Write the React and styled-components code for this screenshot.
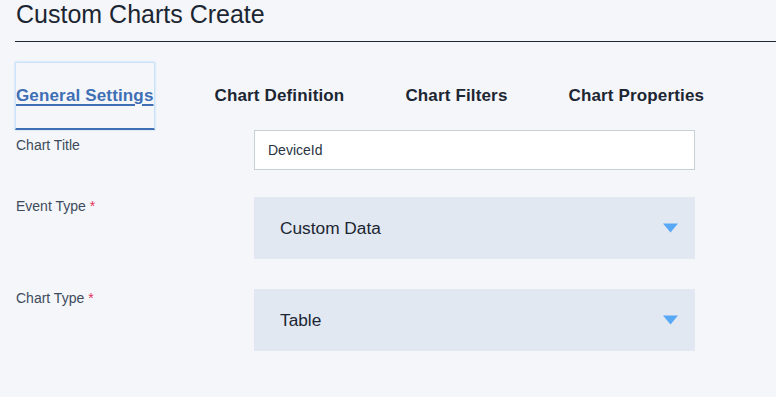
import styled, { createGlobalStyle } from "styled-components";

const GlobalStyle = createGlobalStyle`
  body {
    margin: 0;
    background: #ffffff;
    font-family: "Liberation Sans", Arial, sans-serif;
  }
`;

const tabs = ["General Settings", "Chart Definition", "Chart Filters", "Chart Properties"];

function Arrow() {
  return (
    <svg width="15" height="10" viewBox="0 0 15 10">
      <path d="M0 0.5 H15 L7.5 9.5 Z" fill="#58a8f6" />
    </svg>
  );
}

function App() {
  return (
    <Page>
      <GlobalStyle />
      <Header>
        <Title>Custom Charts Create</Title>
      </Header>
      <TabBar>
        {tabs.map((t, i) => (
          <Tab key={t} $active={i === 0}>
            {t}
          </Tab>
        ))}
      </TabBar>
      <Form>
        <Row>
          <Label $offset={7}>Chart Title</Label>
          <Input defaultValue="DeviceId" />
        </Row>
        <Row $space={27}>
          <Label $offset={1}>
            Event Type <Required>*</Required>
          </Label>
          <Select>
            <span>Custom Data</span>
            <Arrow />
          </Select>
        </Row>
        <Row $space={30}>
          <Label $offset={1}>
            Chart Type <Required>*</Required>
          </Label>
          <Select>
            <span>Table</span>
            <Arrow />
          </Select>
        </Row>
      </Form>
    </Page>
  );
}

const Page = styled.div`
  height: 397px;
  background: #f4f6fa;
  padding-left: 15px;
  box-sizing: border-box;
  overflow: hidden;
`;

const Header = styled.div`
  border-bottom: 1px solid #1f2935;
  padding: 0 0 12px 1px;
`;

const Title = styled.h1`
  margin: 0;
  font-size: 25px;
  font-weight: normal;
  line-height: 29px;
  color: #1c2632;
`;

const TabBar = styled.div`
  display: flex;
  gap: 59px;
  margin-top: 20px;
`;

const Tab = styled.div`
  height: 68px;
  box-sizing: border-box;
  display: flex;
  align-items: center;
  border: 1px solid ${(p) => (p.$active ? "#c9e3fb" : "transparent")};
  border-bottom: 2px solid ${(p) => (p.$active ? "#3e6fb5" : "transparent")};
  box-shadow: ${(p) => (p.$active ? "0 0 2px rgba(120,180,240,0.45)" : "none")};
  font-size: 17px;
  font-weight: bold;
  letter-spacing: 0.15px;
  color: ${(p) => (p.$active ? "#3e6fb5" : "#1c2632")};
  text-decoration: ${(p) => (p.$active ? "underline" : "none")};
  text-decoration-thickness: 2px;
  text-underline-offset: 3px;
  padding-top: 1px;
`;

const Form = styled.div`
  padding-left: 1px;
`;

const Row = styled.div`
  display: grid;
  grid-template-columns: 238px 441px;
  align-items: start;
  margin-top: ${(p) => p.$space || 0}px;
`;

const Label = styled.div`
  padding-top: ${(p) => p.$offset}px;
  font-size: 14px;
  color: #3e4b5b;
`;

const Required = styled.span`
  color: #e3335a;
`;

const Input = styled.input`
  height: 40px;
  box-sizing: border-box;
  width: 100%;
  border: 1px solid #c6d1d5;
  background: #ffffff;
  padding: 0 13px;
  font-family: "Liberation Sans", Arial, sans-serif;
  font-size: 14px;
  color: #2a3542;
  outline: none;
`;

const Select = styled.div`
  height: 62px;
  box-sizing: border-box;
  display: flex;
  align-items: center;
  justify-content: space-between;
  padding: 0 17px 0 26px;
  background: #e1e8f2;
  font-size: 17.3px;
  color: #1c2632;
`;

export default App;
